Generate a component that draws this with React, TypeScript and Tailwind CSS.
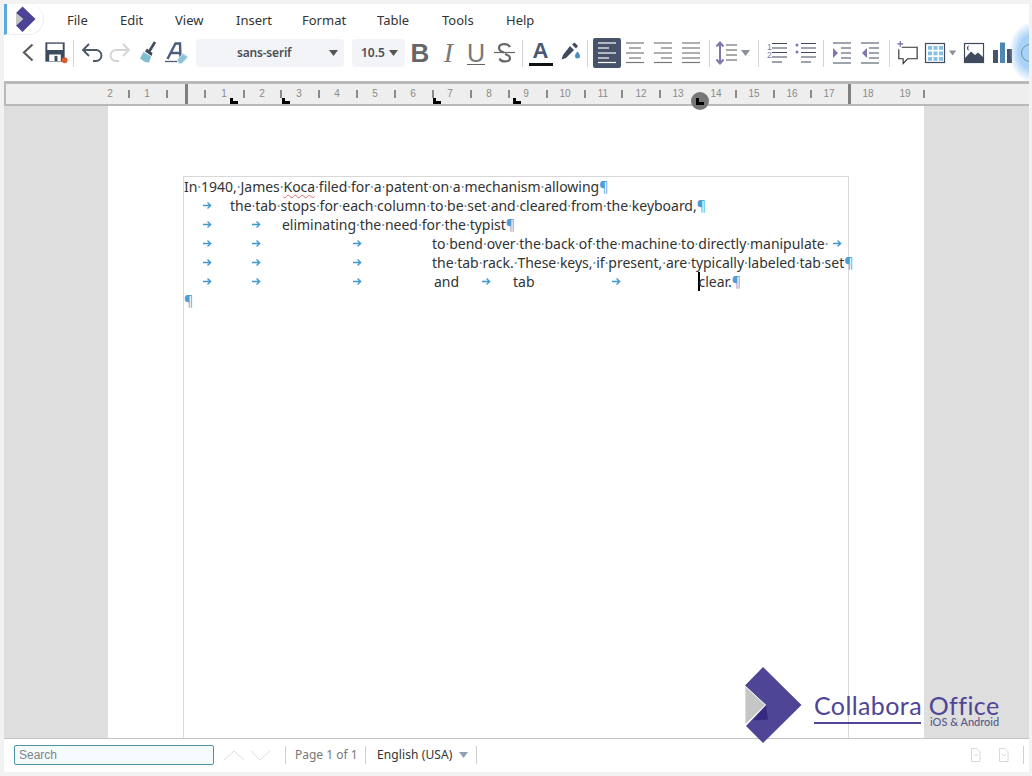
import React from "react";

const Slot = ({ children, w = 28, mr = 0 }: { children?: React.ReactNode; w?: number; mr?: number }) => (
  <div className="flex h-7 shrink-0 items-center justify-center" style={{ width: w, marginRight: mr }}>
    {children}
  </div>
);
const Ico = ({ children, w = 28 }: { children: React.ReactNode; w?: number }) => (
  <svg width={w} height={28} viewBox={`0 0 ${w} 28`} fill="none">{children}</svg>
);
const Sep = ({ w = 18 }: { w?: number }) => (
  <div className="flex h-7 shrink-0 items-center justify-center" style={{ width: w }}>
    <div className="h-[27px] w-px bg-[#d4d4d4]" />
  </div>
);
const Caret = ({ color = "#8a8f98" }: { color?: string }) => (
  <svg width="10" height="6" viewBox="0 0 10 6"><path d="M0 0h9L4.500 6z" fill={color} /></svg>
);

const AlignIcon = ({ kind, color = "#777" }: { kind: "l" | "c" | "r" | "j"; color?: string }) => (
  <Ico>
    {[4, 9, 14, 19, 23.500].map((y, i) => {
      const full = i % 2 === 0;
      let x1 = 5;
      let x2 = 23;
      if (!full && kind === "l") x2 = 16;
      if (!full && kind === "r") x1 = 12;
      if (!full && kind === "c") {
        x1 = 8;
        x2 = 20;
      }
      return <path key={y} d={`M${x1} ${y}H${x2}`} stroke={color} strokeWidth="1.200" />;
    })}
  </Ico>
);

const Arrow = ({ ml }: { ml: number }) => (
  <svg width="10" height="19" viewBox="0 0 10 19" className="shrink-0" style={{ marginLeft: ml }} fill="none">
    <path d="M1 9.500H8.500M5.500 6.500L8.700 9.500L5.500 12.500" stroke="#3d97d3" strokeWidth="1.300" />
  </svg>
);
const Pil = () => <span className="text-[#4a9fd8]">¶</span>;
const T = ({ s, ml = 0 }: { s: string; ml?: number }) => {
  const parts = s.split(" ");
  return (
    <span style={{ marginLeft: ml }}>
      {parts.map((p, i) => (
        <React.Fragment key={i}>
          {i > 0 && <span className="text-[#5f8fb0]">·</span>}
          {p === "Koca" ? <span className="underline decoration-wavy decoration-[#e07070] decoration-1 underline-offset-2">Koca</span> : p}
        </React.Fragment>
      ))}
    </span>
  );
};
const Line = ({ children }: { children: React.ReactNode }) => (
  <div className="flex h-[19px] items-center whitespace-pre text-[14px] leading-[19px] tracking-[-0.025px] text-[#333]">{children}</div>
);

const rulerNums: [string, number][] = [
  ["2", 110], ["1", 147], ["1", 224], ["2", 262], ["3", 299], ["4", 337], ["5", 375], ["6", 413], ["7", 450], ["8", 489],
  ["9", 526], ["10", 565], ["11", 603], ["12", 641], ["13", 678], ["14", 716], ["15", 754], ["16", 792], ["17", 829], ["18", 868], ["19", 905],
];
const rulerTicks = [128, 166, 204, 243, 280, 318, 356, 394, 432, 470, 508, 546, 584, 621, 659, 735, 773, 810, 923];
const tabStops = [230, 282, 433, 513];

export default function App() {
  const menu: [string, number][] = [["File", 53], ["Edit", 55], ["View", 61], ["Insert", 66], ["Format", 75], ["Table", 65], ["Tools", 64], ["Help", 40]];
  return (
    <div className="relative flex h-[776px] w-[1032px] flex-col overflow-hidden bg-[#f2f2f2] pb-1 pl-1 pr-[3px] pt-[4px] font-['Noto_Sans',sans-serif]">
      {/* menu bar */}
      <div className="relative flex h-[31px] shrink-0 items-center bg-white">
        <div className="mr-[23px] flex h-[31px] w-[40px] shrink-0 items-center rounded-r-[18px] border-b border-r border-[#eeeeee] border-l-[3px] border-l-[#5aa9e0] bg-white pl-[8px]">
          <svg width="21" height="26" viewBox="0 0 21 26">
            <path d="M1 7L7.500 0.500L20.500 13L7.500 26L1 19.500L8 13Z" fill="#4c4296" />
            <path d="M1 7L8 13L1 19.500Z" fill="#c4c4c4" />
          </svg>
        </div>
        <div className="flex items-center pt-[2px] text-[13px] text-[#333]">
          {menu.map(([m, w]) => (
            <div key={m} style={{ width: w }}>{m}</div>
          ))}
        </div>
      </div>
      {/* toolbar */}
      <div className="relative flex h-[46px] shrink-0 items-start overflow-hidden bg-white pl-[10px] pt-1">
        <Slot><Ico><path d="M18.500 5.500L10 13.500L18.500 21.500" stroke="#5c5c5c" strokeWidth="2.200" /></Ico></Slot>
        <Slot w={27}>
          <Ico>
            <path d="M3.500 3h20v20h-20z" fill="#3f4a5e" />
            <path d="M5.500 4.500h16v6.500h-16zM7.500 15.500h12v7h-12z" fill="#fff" />
            <path d="M13 17h3v5.500h-3z" fill="#3f4a5e" />
            <circle cx="23.500" cy="21.500" r="3" fill="#de5a2f" />
          </Ico>
        </Slot>
        <Sep w={9} />
        <Slot>
          <Ico>
            <path d="M11 5L5 11L11 17M5 11H18A5.500 5.500 0 0 1 18 22H15" stroke="#4d5767" strokeWidth="1.900" />
          </Ico>
        </Slot>
        <Slot>
          <Ico>
            <path d="M17 5L23 11L17 17M23 11H10A5.500 5.500 0 0 0 10 22H13" stroke="#d2d4d6" strokeWidth="1.900" />
          </Ico>
        </Slot>
        <Slot>
          <Ico>
            <path d="M21 3L15.500 12" stroke="#3f4a5e" strokeWidth="2.600" />
            <path d="M13 9.500L18.500 14L17.500 17L11 12.500Z" fill="#3f4a5e" />
            <path d="M9.500 13L17 17.500L15 23.500L11 23L6 19.500Z" fill="#7fbdd0" />
          </Ico>
        </Slot>
        <Slot>
          <Ico>
            <path d="M5.500 20L13.500 4.500H18L18.500 20M9.500 14H18" stroke="#4b5c7c" strokeWidth="2.400" />
            <path d="M3 22.500H15" stroke="#4b5c7c" strokeWidth="1.300" />
            <path d="M15 21L21 14.500L26 18L20 24.500H17Z" fill="#8fc4d8" stroke="#d7eaf2" />
          </Ico>
        </Slot>
        <div className="ml-[6px] flex h-7 w-[148px] shrink-0 items-center justify-between rounded-sm bg-[#f3f4f8] pl-[41px] pr-[5px] text-[12px] font-semibold tracking-[-0.2px] text-[#4b4f55]">
          <span>sans-serif</span>
          <Caret color="#555" />
        </div>
        <div className="ml-2 flex h-7 w-[53px] shrink-0 items-center justify-between rounded-sm bg-[#f3f4f8] pl-[9px] pr-[6px] text-[12px] font-semibold text-[#4b4f55]">
          <span>10.5</span>
          <Caret color="#555" />
        </div>
        <Slot w={30}><span className="font-['Liberation_Sans',sans-serif] text-[26px] font-bold leading-none text-[#666]">B</span></Slot>
        <Slot w={27}><span className="font-['Liberation_Serif',serif] text-[28px] italic leading-none text-[#7a7a7a]">I</span></Slot>
        <Slot w={28}><span className="border-b-[1.500px] border-[#666] font-['Liberation_Sans',sans-serif] text-[25px] font-light leading-[22px] text-[#777]">U</span></Slot>
        <Slot w={28}>
          <Ico>
            <path d="M20 8C18 4 9 4 9 9C9 11 11 12.500 14 13.500M15 15C18 16 20 17 20 19C20 23.500 11 23.500 9.500 19.500" stroke="#666" strokeWidth="2.200" />
            <path d="M4 13.500H25" stroke="#666" strokeWidth="1.200" />
          </Ico>
        </Slot>
        <Sep w={9} />
        <div className="flex h-7 w-[27px] shrink-0 flex-col items-center">
          <span className="h-[23px] font-['Liberation_Sans',sans-serif] text-[22px] font-bold leading-[24px] text-[#4a5870]">A</span>
          <span className="mt-[1px] h-[3px] w-[24px] bg-[#111]" />
        </div>
        <Slot w={29}>
          <Ico>
            <path d="M15 7L19 11L11 19L6.500 20.500L8 16Z" fill="#3f4a5e" />
            <path d="M17 5.500L19.500 3.500L23 7L21 9.500Z" fill="#3f4a5e" />
            <path d="M22.500 12.500C24.500 15 25 16 25 17A2.500 2.500 0 0 1 20 17C20 16 20.500 15 22.500 12.500Z" fill="#4a8ec0" />
          </Ico>
        </Slot>
        <Sep w={9} />
        <div className="-mt-[1px] ml-[1px] flex h-[30px] w-7 shrink-0 items-center justify-center rounded-[2px] bg-[#46536b]">
          <AlignIcon kind="l" color="#fff" />
        </div>
        <Slot><AlignIcon kind="c" /></Slot>
        <Slot><AlignIcon kind="r" /></Slot>
        <Slot w={28}><AlignIcon kind="j" /></Slot>
        <Sep w={8} />
        <Slot w={26}>
          <Ico w={26}>
            <path d="M7 4V24M3.500 7.500L7 3.500L10.500 7.500M3.500 20.500L7 24.500L10.500 20.500" stroke="#7f76ad" strokeWidth="2" />
            <path d="M13 6H24M13 11H24M13 16H24M13 21H24" stroke="#555" strokeWidth="1.200" />
          </Ico>
        </Slot>
        <div className="flex h-7 w-[14px] shrink-0 items-center justify-center"><Caret /></div>
        <Sep w={10} />
        <Slot>
          <Ico>
            <text x="4" y="11" fontSize="8.500" fontFamily="Liberation Sans" fill="#7f76ad">1</text>
            <text x="4" y="19" fontSize="8.500" fontFamily="Liberation Sans" fill="#7f76ad">2</text>
            <path d="M9 4.500H24M9 9H24M9 13.500H24M9 18H24M9 23H19" stroke="#3f4a5e" strokeWidth="1.200" />
          </Ico>
        </Slot>
        <Slot>
          <Ico>
            <circle cx="6" cy="6" r="1.500" fill="#7f76ad" /><circle cx="6" cy="13" r="1.500" fill="#7f76ad" />
            <path d="M10 4.500H25M10 9H25M10 13.500H25M10 18H25M10 23H20" stroke="#3f4a5e" strokeWidth="1.200" />
          </Ico>
        </Slot>
        <Sep w={9} />
        <Slot>
          <Ico>
            <path d="M5 4H23M13 9H23M13 14H23M13 19H23M5 24H23" stroke="#3f4a5e" strokeWidth="1.200" />
            <path d="M5 9L10 14L5 19Z" fill="#7f76ad" />
          </Ico>
        </Slot>
        <Slot>
          <Ico>
            <path d="M5 4H23M13 9H23M13 14H23M13 19H23M5 24H23" stroke="#3f4a5e" strokeWidth="1.200" />
            <path d="M11 9L6 14L11 19Z" fill="#7f76ad" />
          </Ico>
        </Slot>
        <Sep w={10} />
        <Slot w={27}>
          <Ico>
            <path d="M8 8H24V20H14L9.500 25V20H5V10" stroke="#333" strokeWidth="1.200" />
            <path d="M6.500 1.500V7.500M3.500 4.500H9.500" stroke="#6f62b0" strokeWidth="1.200" />
          </Ico>
        </Slot>
        <Slot w={28}>
          <Ico>
            <rect x="4.500" y="4.500" width="19" height="19" fill="#fff" stroke="#3f4a5e" strokeWidth="1.200" />
            {[7, 12.500, 18].map((x) => [7, 12.500, 18].map((y) => <rect key={`${x}-${y}`} x={x} y={y} width="4" height="3.800" fill="#85bfe6" />))}
          </Ico>
        </Slot>
        <div className="flex h-7 w-[8px] shrink-0 items-center justify-center"><Caret /></div>
        <div className="w-[3px] shrink-0" />
        <Slot w={28}>
          <Ico>
            <rect x="4.500" y="4.500" width="19" height="19" fill="#fff" stroke="#3f4a5e" strokeWidth="1.200" />
            <path d="M5 23V19L11 12.500L15 16L18 13.500L23 18V23Z" fill="#3f4a5e" />
            <path d="M9.500 6.500A2.500 2.500 0 1 0 9.500 11.500A3 3 0 0 1 9.500 6.500Z" fill="#3f4a5e" />
          </Ico>
        </Slot>
        <Slot w={28}>
          <Ico>
            <path d="M5 11H10V24H5z" fill="#46536b" /><path d="M12 3.500H17V24H12z" fill="#4d87b5" /><path d="M19 10H24V24H19z" fill="#46536b" />
          </Ico>
        </Slot>
      </div>
      {/* ruler */}
      <div className="relative h-[25px] shrink-0 border-b-[2px] border-l-[2px] border-t-[3px] border-[#b9b9b9] bg-[#eeeeee] font-['Liberation_Sans',sans-serif] text-[10px] text-[#8a8a8a]">
        {rulerNums.map(([n, x]) => (
          <span key={x} className="absolute top-[3px] -translate-x-1/2 leading-[14px]" style={{ left: x - 6 }}>{n}</span>
        ))}
        {rulerTicks.map((x) => (
          <span key={x} className="absolute top-[6px] h-2 w-[2px] bg-[#8a8a8a]" style={{ left: x - 6 }} />
        ))}
        <span className="absolute top-0 h-[20px] w-[3px] bg-[#808080]" style={{ left: 179 }} />
        <span className="absolute top-0 h-[20px] w-[3px] bg-[#808080]" style={{ left: 842 }} />
        {tabStops.map((x) => (
          <span key={x} className="absolute top-[14px] h-[6px] w-2 border-b-[3px] border-l-[3px] border-black" style={{ left: x - 6 }} />
        ))}
      </div>
      {/* document */}
      <div className="flex min-h-0 flex-1 overflow-hidden bg-[#dedede] pl-[104px]">
        <div className="h-full w-[816px] bg-white pl-[75px] pt-[70px]">
          <div className="h-[700px] w-[666px] border border-[#d8d8d8]">
            <Line><T s="In 1940, James Koca filed for a patent on a mechanism allowing" /><Pil /></Line>
            <Line><Arrow ml={18} /><T ml={18} s="the tab stops for each column to be set and cleared from the keyboard," /><Pil /></Line>
            <Line><Arrow ml={18} /><Arrow ml={39} /><T ml={21} s="eliminating the need for the typist" /><Pil /></Line>
            <Line><Arrow ml={18} /><Arrow ml={39} /><Arrow ml={91} /><T ml={70} s="to bend over the back of the machine to directly manipulate " /><Arrow ml={4} /></Line>
            <Line><Arrow ml={18} /><Arrow ml={39} /><Arrow ml={91} /><T ml={70} s="the tab rack. These keys, if present, are typically labeled tab set" /><Pil /></Line>
            <Line>
              <Arrow ml={18} /><Arrow ml={39} /><Arrow ml={91} /><span className="ml-[72px]">and</span><Arrow ml={22} /><span className="ml-[22px]">tab</span><Arrow ml={76} />
              <span className="ml-[77px] h-[19px] w-[2px] bg-black" /><span className="-ml-[1px]">clear.</span><Pil />
            </Line>
            <Line><Pil /></Line>
          </div>
        </div>
      </div>
      {/* status bar */}
      <div className="flex h-[34px] shrink-0 items-center border-t border-[#c4c4c4] bg-white pb-[2px] pl-[10px] text-[12px]">
        <div className="flex h-[20px] w-[200px] shrink-0 items-center rounded-[2px] border border-[#4f93a8] bg-[#f5fbfd] pl-1 font-['Liberation_Sans',sans-serif] text-[12px] text-[#7c8489]">Search</div>
        <svg width="62" height="16" viewBox="0 0 62 16" className="ml-[9px] shrink-0" fill="none">
          <path d="M1 13L11 4L21 13" stroke="#dedede" /><path d="M28 4L37 13L47 4" stroke="#dedede" />
        </svg>
        <div className="mr-[9px] h-[18px] w-px shrink-0 bg-[#cfcfcf]" />
        <span className="w-[61px] shrink-0 whitespace-nowrap text-[#777]">Page 1 of 1</span>
        <div className="ml-[9px] mr-[11px] h-[18px] w-px shrink-0 bg-[#cfcfcf]" />
        <span className="w-[82px] shrink-0 whitespace-nowrap tracking-[0.1px] text-[#333]">English (USA)</span>
        <Caret color="#8fa1b3" />
        <div className="ml-[7px] h-[18px] w-px shrink-0 bg-[#cfcfcf]" />
        <div className="flex-1" />
        <svg width="40" height="16" viewBox="0 0 40 16" className="shrink-0" fill="none" stroke="#d8d8d8">
          <path d="M1.500 1.500H7L10 4.500V14.500H1.500Z" /><path d="M4 9L6 7L8 9" />
          <path d="M29.500 1.500H35L38 4.500V14.500H29.500Z" /><path d="M32 7L34 9L36 7" />
        </svg>
        <div className="ml-[13px] mr-[5px] h-[18px] w-px shrink-0 bg-[#cfcfcf]" />
      </div>
      {/* glow behind the clipped toolbar button */}
      <div className="absolute left-[1009px] top-[20px] h-[62px] w-[20px] overflow-hidden">
        <div className="absolute left-0 top-[2px] h-[60px] w-[44px] rounded-full bg-[radial-gradient(closest-side,#a9d2f7_55%,#ffffff00)]" />
        <div className="absolute left-[12px] top-[24px] h-[18px] w-[18px] rounded-full border border-[#76909f]" />
      </div>
      {/* watermark logo */}
      <div className="absolute left-[745px] top-[667px] flex">
        <svg width="57" height="77" viewBox="0 0 57 77" className="shrink-0">
          <path d="M0 18.500L18 0L56.500 38L18 76L1 59L21 38Z" fill="#4f4596" />
          <path d="M21 38L23 52.500L8 53.500Z" fill="#362a80" />
          <path d="M0 19L20.500 38L0 58Z" fill="#c6c6c6" stroke="#fff" strokeWidth="0.800" />
        </svg>
        <div className="ml-[12px] flex flex-col">
          <span className="mt-[26px] whitespace-nowrap font-['Lato',sans-serif] text-[25px] leading-[24px] tracking-[0.4px] text-[#4f4596]">Collabora Office</span>
          <div className="flex items-start">
            <span className="mt-[5px] h-[2px] w-[107px] bg-[#4f4596]" />
            <span className="ml-[9px] whitespace-nowrap font-['Lato',sans-serif] text-[11px] font-medium leading-[10px] text-[#575a8c]">iOS &amp; Android</span>
          </div>
        </div>
      </div>
      {/* active tab handle */}
      <div className="absolute left-[691px] top-[92px] flex h-[18px] w-[18px] items-center justify-center rounded-full bg-[#777]">
        <span className="h-[7px] w-2 border-b-[3px] border-l-[3px] border-black" />
      </div>
    </div>
  );
}
